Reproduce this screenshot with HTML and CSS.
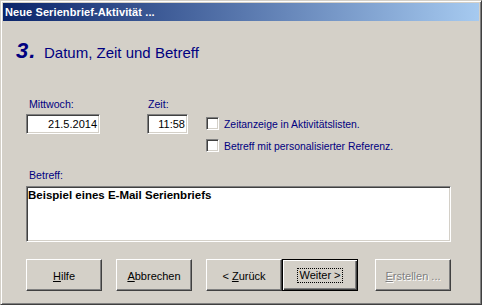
FILE: index.html
```html
<!DOCTYPE html>
<html lang="de">
<head>
<meta charset="utf-8">
<title>Neue Serienbrief-Aktivität</title>
<link rel="stylesheet" href="styles.css">
</head>
<body>
<div class="window">
  <div class="titlebar">Neue Serienbrief-Aktivität ...</div>
  <div class="content">
    <div class="heading">
      <span class="step">3.</span>
      <span class="heading-text">Datum, Zeit und Betreff</span>
    </div>
    <div class="fields">
      <div class="field date-field">
        <div class="label">Mittwoch:</div>
        <div class="input">21.5.2014</div>
      </div>
      <div class="field time-field">
        <div class="label">Zeit:</div>
        <div class="input">11:58</div>
      </div>
      <div class="checks">
        <div class="check"><span class="box"></span><span class="check-label">Zeitanzeige in Aktivitätslisten.</span></div>
        <div class="check"><span class="box"></span><span class="check-label">Betreff mit personalisierter Referenz.</span></div>
      </div>
    </div>
    <div class="subject">
      <div class="label">Betreff:</div>
      <div class="textarea">Beispiel eines E-Mail Serienbriefs</div>
    </div>
    <div class="buttons">
      <div class="btn"><span><u>H</u>ilfe</span></div>
      <div class="btn"><span><u>A</u>bbrechen</span></div>
      <div class="btn btn-back"><span>&lt; <u>Z</u>urück</span></div>
      <div class="btn btn-default"><span class="focus">Weiter &gt;</span></div>
      <div class="btn btn-disabled"><span><u>E</u>rstellen ...</span></div>
    </div>
  </div>
</div>
</body>
</html>
```
FILE: styles.css
```css
* { box-sizing: border-box; }
html, body { margin: 0; padding: 0; background: #d4d0c8; }
body { font-family: "Liberation Sans", Arial, sans-serif; font-size: 11px; }

.window {
  width: 482px;
  height: 305px;
  border: 1px solid;
  border-color: #d4d0c8 #404040 #404040 #d4d0c8;
  box-shadow: inset 1px 1px #ffffff, inset -1px -1px #808080;
  padding: 2px;
  background: #d4d0c8;
  display: flex;
  flex-direction: column;
}

.titlebar {
  height: 18px;
  line-height: 18px;
  padding-left: 2px;
  background: linear-gradient(to right, #0a246a, #a6caf0);
  color: #ffffff;
  font-weight: bold;
  font-size: 11px;
  letter-spacing: 0.1px;
  white-space: nowrap;
}

.content {
  padding-left: 23px;
  display: flex;
  flex-direction: column;
}

.heading {
  margin-top: 19px;
  margin-left: -10px;
  height: 22px;
  display: flex;
  align-items: baseline;
  color: #000080;
}
.step {
  font-size: 22px;
  line-height: 22px;
  font-weight: bold;
  font-style: italic;
  width: 28px;
  letter-spacing: 1px;
}
.heading-text {
  font-size: 15px;
  line-height: 17px;
}

.label {
  color: #000080;
  font-size: 10.6px;
  line-height: 13px;
  padding-left: 3px;
  white-space: nowrap;
}

.fields {
  margin-top: 36px;
  display: flex;
  align-items: flex-start;
}
.field { display: flex; flex-direction: column; }
.date-field { width: 74px; }
.time-field { width: 41px; margin-left: 47px; }
.time-field .label { padding-left: 1px; }

.input {
  margin-top: 3px;
  height: 20px;
  background: #ffffff;
  border: 1px solid;
  border-color: #808080 #ffffff #ffffff #808080;
  box-shadow: inset 1px 1px #404040, inset -1px -1px #d4d0c8;
  text-align: right;
  padding-right: 2px;
  line-height: 18px;
  color: #000000;
}

.checks {
  margin-left: 18px;
  margin-top: 19px;
  display: flex;
  flex-direction: column;
  gap: 9px;
}
.check { display: flex; align-items: flex-start; height: 13px; }
.box {
  width: 13px;
  height: 13px;
  background: #ffffff;
  border: 1px solid;
  border-color: #808080 #ffffff #ffffff #808080;
  box-shadow: inset 1px 1px #404040, inset -1px -1px #d4d0c8;
  flex: none;
}
.check-label {
  color: #000080;
  font-size: 10.4px;
  line-height: 13px;
  margin-left: 5px;
  margin-top: 1px;
  white-space: nowrap;
}

.subject { margin-top: 17px; display: flex; flex-direction: column; }
.textarea {
  margin-top: 4px;
  width: 425px;
  height: 56px;
  background: #ffffff;
  border: 1px solid;
  border-color: #808080 #ffffff #ffffff #808080;
  box-shadow: inset 1px 1px #404040, inset -1px -1px #d4d0c8;
  padding: 2px 1px;
  font-weight: bold;
  font-size: 11.5px;
  line-height: 13px;
  color: #000000;
}

.buttons {
  margin-top: 17px;
  display: flex;
}
.btn {
  width: 76px;
  height: 32px;
  margin-right: 14px;
  border: 1px solid;
  border-color: #ffffff #404040 #404040 #ffffff;
  box-shadow: inset -1px -1px #808080;
  display: flex;
  align-items: center;
  justify-content: center;
  color: #000000;
  padding-top: 1px;
}
.btn-back { margin-right: 0; }
.btn-default {
  border-color: #000000;
  box-shadow: inset 1px 1px #ffffff, inset -1px -1px #404040, inset -2px -2px #808080;
  margin-right: 17px;
}
.focus {
  outline: 1px dotted #000000;
  padding: 0 1px;
  line-height: 13px;
}
.btn-disabled {
  color: #808080;
  text-shadow: 1px 1px #ffffff;
  margin-right: 0;
}
```
